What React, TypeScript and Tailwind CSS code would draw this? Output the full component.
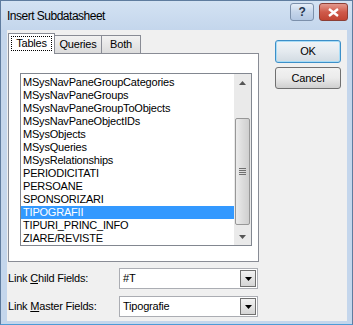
import React from "react";

const items = [
  "MSysNavPaneGroupCategories",
  "MSysNavPaneGroups",
  "MSysNavPaneGroupToObjects",
  "MSysNavPaneObjectIDs",
  "MSysObjects",
  "MSysQueries",
  "MSysRelationships",
  "PERIODICITATI",
  "PERSOANE",
  "SPONSORIZARI",
  "TIPOGRAFII",
  "TIPURI_PRINC_INFO",
  "ZIARE/REVISTE",
];

function ArrowDown() {
  return (
    <svg width="7" height="4" viewBox="0 0 7 4">
      <path d="M0 0 H7 L3.5 4 Z" fill="#000" />
    </svg>
  );
}

function Combo({ value }: { value: string }) {
  return (
    <div className="w-[139px] h-[21px] border border-[#abadb3] bg-white flex items-center pl-[3px] pr-[1px]">
      <span className="flex-1">{value}</span>
      <div className="w-[16px] h-[17px] border border-[#707070] bg-gradient-to-b from-[#f2f2f2] to-[#d5d5d5] flex items-center justify-center">
        <ArrowDown />
      </div>
    </div>
  );
}

export default function App() {
  return (
    <div className="w-[353px] h-[325px] flex flex-col bg-[#c4d6ec] border border-[#5f7c9f] border-b-[#4d9bd6] font-['Liberation_Sans',sans-serif] text-[11px] tracking-[-0.2px] text-black overflow-hidden">
      {/* title bar */}
      <div className="h-[29px] flex items-start pl-[6px] pr-[4px] bg-gradient-to-b from-[#d3e2f3] to-[#c4d6ec]">
        <span className="mt-[6px] text-[12px] tracking-[-0.5px]">Insert Subdatasheet</span>
        <div className="ml-auto mt-[2px] flex gap-[5px]">
          <div className="w-[24px] h-[18px] rounded-[3px] border border-[#7c90ab] bg-gradient-to-b from-[#e6eef8] via-[#c5d5ea] to-[#b3c7e2] flex items-center justify-center text-[12px] font-bold text-[#26364f]">
            ?
          </div>
          <div className="w-[29px] h-[18px] rounded-[3px] border border-[#8c3f36] bg-gradient-to-b from-[#e3988d] via-[#cf5a4a] to-[#c14432] flex items-center justify-center">
            <svg width="11" height="9" viewBox="0 0 11 9">
              <path d="M1 1 L10 8 M10 1 L1 8" stroke="#fff" strokeWidth="2.4" />
            </svg>
          </div>
        </div>
      </div>

      {/* client area */}
      <div className="flex-1 ml-[6px] mr-[5px] mb-[3px] bg-[#f0f0f0] flex pl-[1px] pt-[3px]">
        <div className="w-[251px] flex flex-col">
          {/* tabs */}
          <div className="h-[20px] flex items-end">
            <div className="w-[47px] h-[21px] bg-white border border-b-0 border-[#898c95] flex items-start justify-center pt-[2px] -mb-[1px] relative z-10">
              <span className="border border-dotted border-black px-[2px] leading-[13px] w-[41px] text-center">Tables</span>
            </div>
            <div className="w-[47px] h-[18px] bg-gradient-to-b from-[#f2f2f2] to-[#dcdcdc] border border-b-0 border-l-0 border-[#898c95] flex items-center justify-center">
              Queries
            </div>
            <div className="w-[39px] h-[18px] bg-gradient-to-b from-[#f2f2f2] to-[#dcdcdc] border border-b-0 border-l-0 border-[#898c95] flex items-center justify-center">
              Both
            </div>
          </div>
          {/* panel */}
          <div className="h-[209px] bg-white border border-[#898c95] pl-[11px] pt-[19px]">
            <div className="w-[232px] h-[173px] border border-[#828790] flex">
              <div className="flex-1 pt-[2px]">
                {items.map((it) => (
                  <div
                    key={it}
                    className={
                      it === "TIPOGRAFII"
                        ? "h-[13px] leading-[13px] pl-[2px] bg-[#3399ff] text-white"
                        : "h-[13px] leading-[13px] pl-[2px]"
                    }
                  >
                    {it}
                  </div>
                ))}
              </div>
              <div className="w-[17px] bg-[#eaeaea] flex flex-col items-center">
                <div className="h-[17px] flex items-center justify-center">
                  <svg width="7" height="4" viewBox="0 0 7 4">
                    <path d="M0 4 H7 L3.5 0 Z" fill="#555" />
                  </svg>
                </div>
                <div className="mt-[27px] w-[15px] h-[107px] rounded-[2px] border border-[#979797] bg-gradient-to-r from-[#ececec] via-[#dcdcdc] to-[#cfcfcf] flex flex-col items-center justify-center gap-[1px]">
                  <div className="w-[7px] h-[1px] bg-[#6f6f6f]" />
                  <div className="w-[7px] h-[1px] bg-[#6f6f6f]" />
                  <div className="w-[7px] h-[1px] bg-[#6f6f6f]" />
                  <div className="w-[7px] h-[1px] bg-[#6f6f6f]" />
                </div>
                <div className="mt-auto h-[17px] flex items-center justify-center">
                  <svg width="7" height="4" viewBox="0 0 7 4">
                    <path d="M0 0 H7 L3.5 4 Z" fill="#555" />
                  </svg>
                </div>
              </div>
            </div>
          </div>
          {/* link fields */}
          <div className="mt-[6px] flex items-center">
            <span className="w-[111px]">
              Link <u>C</u>hild Fields:
            </span>
            <Combo value="#T" />
          </div>
          <div className="mt-[7px] flex items-center">
            <span className="w-[111px]">
              Link <u>M</u>aster Fields:
            </span>
            <Combo value="Tipografie" />
          </div>
        </div>

        {/* buttons */}
        <div className="ml-[16px] pt-[7px] flex flex-col gap-[4px]">
          <div className="w-[66px] h-[23px] rounded-[3px] border border-[#3c8fc8] shadow-[inset_0_0_0_1px_#a8dcf6] bg-gradient-to-b from-[#f0f4f7] via-[#e4eaef] to-[#d2dbe2] flex items-center justify-center">
            OK
          </div>
          <div className="w-[66px] h-[22px] rounded-[3px] border border-[#707070] bg-gradient-to-b from-[#f2f2f2] via-[#ebebeb] to-[#cfcfcf] flex items-center justify-center">
            Cancel
          </div>
        </div>
      </div>
    </div>
  );
}
